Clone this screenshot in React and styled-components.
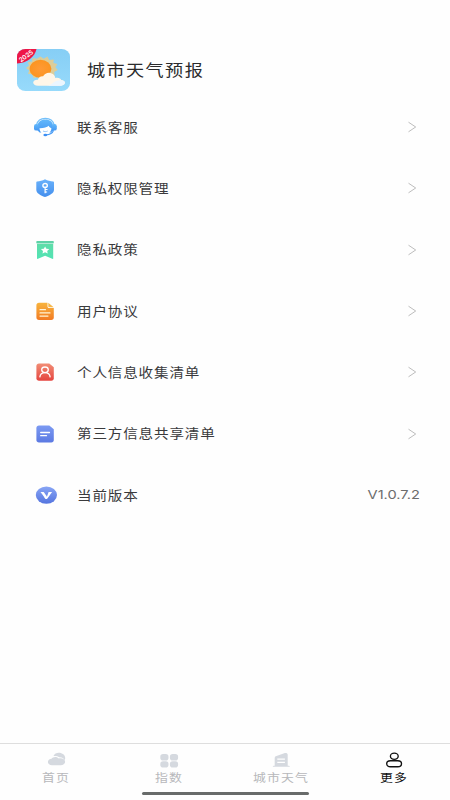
import React from 'react';
import styled, { createGlobalStyle } from 'styled-components';

const GlobalStyle = createGlobalStyle`
* {
    box-sizing: border-box;
}
body {
    margin: 0;
    background: #fefefe;
    font-family: "Noto Sans CJK SC", "Noto Sans", sans-serif;
}
`;

const Page = styled.div`
height: 800px;
width: 450px;
display: flex;
flex-direction: column;
overflow: hidden;
svg {
    display: block;
    overflow: visible;
}
`;

const Header = styled.header`
display: flex;
align-items: center;
height: 47px;
margin-top: 46.5px;
padding-left: 17px;
`;

const Title = styled.h1`
margin: 0 0 2px 16.5px;
font-size: 16.2px;
font-weight: 400;
line-height: 24px;
letter-spacing: 1.25px;
color: #2b2b2d;
white-space: nowrap;
transform: scaleX(1.12);
transform-origin: left center;
`;

const Menu = styled.main`
flex: 1;
padding-top: 3px;
`;

const Row = styled.div`
display: flex;
align-items: center;
height: 61.33px;
padding: 0 31px 0 33px;
`;

const RowIcon = styled.div`
width: 24px;
height: 22px;
margin-right: 20px;
`;

const Label = styled.span`
margin-bottom: 1px;
font-size: 13px;
line-height: 20px;
letter-spacing: 0.75px;
color: #3a3a3c;
white-space: nowrap;
transform: scaleX(1.12);
transform-origin: left center;
`;

const Side = styled.div`
margin-left: auto;
display: flex;
align-items: center;
`;

const Version = styled.span`
margin-right: -0.7px;
font-family: Inter, "Noto Sans", sans-serif;
font-size: 12px;
line-height: 20px;
color: #6c6c6c;
transform: scaleX(1.22);
transform-origin: right center;
`;

const TabBar = styled.nav`
display: flex;
height: 48.5px;
border-top: 1px solid #dedede;
`;

const Tab = styled.div`
flex: 1;
display: flex;
flex-direction: column;
align-items: center;
padding-top: 8px;
color: ${props => props.$active ? '#111' : '#b7b8bb'};
span {
    font-size: 11px;
    line-height: 16px;
    margin-top: 0.5px;
    letter-spacing: 1px;
    white-space: nowrap;
    transform: scaleX(1.17);
}
`;

const HomeIndicator = styled.div`
width: 167px;
height: 3px;
margin: 0 auto 5.5px;
border-radius: 2px;
background: #686b6a;
`;

const AppLogo = () => (
    <svg width="53" height="42" viewBox="0 0 53 42">
        <defs>
            <clipPath id="logoClip"><rect width="53" height="42" rx="8.5" ry="7.5" /></clipPath>
            <linearGradient id="sky" x1="0" y1="0" x2="0" y2="1">
                <stop offset="0" stopColor="#86cef5" />
                <stop offset="1" stopColor="#97dafb" />
            </linearGradient>
            <radialGradient id="sun">
                <stop offset="0" stopColor="#ff9a35" />
                <stop offset="1" stopColor="#fb9521" />
            </radialGradient>
        </defs>
        <g clipPath="url(#logoClip)">
            <rect width="53" height="42" fill="url(#sky)" />
            <path d="M23.5 7.500l3.200 2.300 3.800-2.200 1.700 3.400 4.600-.6-.4 3.700 3.900 1-1.900 3.200 2.400 2.700-3.600 1.900.4 3.600-4.400.2-1.900 3.300-4-1.500-3.600 2.500-3-2.800-4.400.9-.9-3.600-4.400-.8 1.200-3.300-3.200-2.400 3-2.500-1.200-3.300 4.200-.8.600-3.500 4.200.8z" fill="#efcc82" opacity=".8" />
            <ellipse cx="23.500" cy="19.800" rx="10.900" ry="9" fill="url(#sun)" />
            <path d="M21 36.800c-3 0-4.800-1.400-4.800-3.200 0-1.900 2-3.100 4.800-2.900.4-2.400 2.600-3.700 5.100-3.400 1.600-2.700 4.400-4 7.200-3.400 3 .6 4.700 2.700 5 5 3-.7 5.400.3 5.900 2.100 2.400.2 4 1.300 3.800 2.800-.2 1.800-2.200 3-5 3z" fill="#fff6e8" />
            <path d="M29 36.800c3.500 0 5.500-1.900 7.500-3.400 3-2 8-3 10.500-1.100 2.300 2-.5 4.500-4 4.500z" fill="#ebf6ff" />
            <path d="M0 0h19.500C18 7.500 10 14.200 0 14.500z" fill="#ee1747" />
            <text x="9" y="9.300" textAnchor="middle" fontFamily="Inter, sans-serif" fontSize="6.300" fontWeight="600" fill="#fff" transform="rotate(-36 9 7)">2025</text>
        </g>
    </svg>
);

const Gradient = ({ id, from, to }) => (
    <defs>
        <linearGradient id={id} x1="0" y1="0" x2="0" y2="1">
            <stop offset="0" stopColor={from} />
            <stop offset="1" stopColor={to} />
        </linearGradient>
    </defs>
);

const ServiceIcon = () => (
    <svg width="24" height="22" viewBox="0 0 24 22">
        <Gradient id="service" from="#62b8fb" to="#4598f3" />
        <path d="M3.500 9C4.500 4.600 7.800 2.400 12.300 2.400S20.100 4.600 21.100 9" fill="none" stroke="#74c0fa" strokeWidth="1.200" />
        <path d="M4.600 14.500V9.800c0-3.700 3.300-6.300 7.700-6.300s7.700 2.600 7.700 6.300v4.700l-2 2H6.600z" fill="url(#service)" />
        <path d="M6.500 12.200c4.200.1 7.400-.9 9.300-2.500.4 1.300 1.200 2.100 2.600 2.500-.2 3.700-2.700 6-6 6s-5.700-2.300-5.900-6z" fill="#fff" />
        <rect x="1" y="8" width="4.800" height="6.600" rx="2.200" fill="url(#service)" />
        <rect x="19" y="8" width="4.800" height="6.600" rx="2.200" fill="url(#service)" />
        <path d="M20.600 14.200c-1 2.900-3.700 4.400-7.600 4.700" fill="none" stroke="#459af5" strokeWidth="1.100" />
        <path d="M10 15c1.400.8 3.300.8 4.700 0" fill="none" stroke="#7ab8f7" strokeWidth=".8" />
        <ellipse cx="12.300" cy="19" rx="1.900" ry="1.200" fill="#3c8ef3" />
    </svg>
);

const ShieldIcon = () => (
    <svg width="24" height="22" viewBox="0 0 24 22">
        <Gradient id="shield" from="#6ab2fb" to="#438eed" />
        <path d="M12 2.200c2.600 1.400 5.400 2 8.200 2.300.6.100.8.400.8 1v7.200c0 3.500-4.500 5.700-9 7.400-4.500-1.700-8.700-3.900-8.700-7.400V5.500c0-.6.200-.9.800-1 2.700-.3 5.300-.9 7.900-2.300z" fill="url(#shield)" />
        <ellipse cx="12.100" cy="8.400" rx="2.200" ry="1.900" fill="none" stroke="#fff" strokeWidth="1.400" />
        <path d="M12.100 10.300v6M12.100 12.500h2.400M12.100 15h2" fill="none" stroke="#fff" strokeWidth="1.200" />
    </svg>
);

const PolicyIcon = () => (
    <svg width="24" height="22" viewBox="0 0 24 22">
        <Gradient id="policy" from="#5fdda9" to="#52e3b4" />
        <rect x="3.300" y="2" width="17.500" height="2.500" rx=".8" fill="#5ed2a7" />
        <path d="M4 5h16.200v14.400c0 .6-.5.700-1 .4l-7.100-3.100L5 19.800c-.6.300-1 .1-1-.4z" fill="url(#policy)" />
        <path d="M12.100 7.400l1.300 2.300 2.900.4-2.100 1.800.5 2.600-2.600-1.200-2.600 1.200.5-2.600-2.100-1.800 2.900-.4z" fill="#fff" />
    </svg>
);

const AgreementIcon = () => (
    <svg width="24" height="22" viewBox="0 0 24 22">
        <Gradient id="agreement" from="#f8b43d" to="#f27b24" />
        <path d="M6 2.700h8.500v3.600c0 1.200.7 1.800 2 1.800h4.300v9.300c0 1.600-.9 2.500-2.500 2.500H6c-1.600 0-2.600-.9-2.600-2.500V5.200c0-1.600 1-2.500 2.600-2.500z" fill="url(#agreement)" />
        <path d="M15.300 2.700l5.400 4.600h-3.900c-1 0-1.500-.4-1.500-1.200z" fill="#f6b84b" />
        <path d="M7 9.700h5.500M7 12.900h10M7 16.100h8" stroke="#fff3d6" strokeWidth="1.200" strokeLinecap="round" />
    </svg>
);

const PersonIcon = () => (
    <svg width="24" height="22" viewBox="0 0 24 22">
        <Gradient id="person" from="#f18d75" to="#e5443f" />
        <path d="M6 2.600h10.300l4.500 3.700v11c0 1.600-.9 2.500-2.500 2.500H6c-1.600 0-2.600-.9-2.600-2.500V5.100c0-1.600 1-2.500 2.600-2.500z" fill="url(#person)" />
        <ellipse cx="12" cy="8.800" rx="3.300" ry="2.800" fill="none" stroke="#fff" strokeWidth="1.300" />
        <path d="M6.900 15.900c.3-2.600 2.200-4.200 5.100-4.200s4.800 1.600 5.100 4.200" fill="none" stroke="#fff" strokeWidth="1.300" strokeLinecap="round" />
    </svg>
);

const ShareIcon = () => (
    <svg width="24" height="22" viewBox="0 0 24 22">
        <Gradient id="share" from="#7c9af2" to="#5b79e2" />
        <path d="M6 2.400h10.300l4.500 3.900v10.800c0 1.600-.9 2.500-2.500 2.500H6c-1.600 0-2.600-.9-2.600-2.500V4.900c0-1.600 1-2.500 2.600-2.500z" fill="url(#share)" />
        <path d="M7.700 9.500h8.800M7.700 12.700h5.800" stroke="#fff" strokeWidth="1.300" strokeLinecap="round" />
    </svg>
);

const VersionIcon = () => (
    <svg width="24" height="22" viewBox="0 0 24 22">
        <Gradient id="version" from="#88a5f5" to="#5575df" />
        <ellipse cx="13.400" cy="11.100" rx="10.600" ry="8.600" fill="url(#version)" />
        <path d="M7.500 7.900h3.200l3.200 4.600-1.200 2.400z" fill="#fff" />
        <path d="M15.600 7.900h3.500l-4.700 6.500c-.6.700-1.600.8-2.300.2l-.9-1.200 2.700-.7z" fill="#fff" />
    </svg>
);

const Arrow = () => (
    <svg width="14" height="12" viewBox="0 0 14 12">
        <path d="M3.500 1.200l7.200 4.800-7.200 4.800" fill="none" stroke="#bdbdbd" strokeWidth="1" />
    </svg>
);

const CloudIcon = () => (
    <svg width="20" height="16" viewBox="0 0 20 16">
        <path d="M7.500 4.100C8.500 1.700 10.400.8 12.700.8c3.700 0 6.500 2.300 6.500 5.200 0 .9-.2 1.700-.6 2.300-.8-2-2.900-3.200-5.300-3-1.500-1.100-3.600-1.600-5.800-1.200z" fill="#d5d9df" />
        <path d="M6 13.200c-2.400 0-4.100-1.300-4.100-3.200 0-1.800 1.500-3.200 3.600-3.300.8-1.100 2.100-1.800 3.700-1.800 1.500 0 2.800.6 3.600 1.600 3.500-.6 6.300.8 6.300 3.200 0 2.200-1.900 3.500-4.400 3.500z" fill="#d5d9df" />
    </svg>
);

const GridIcon = () => (
    <svg width="20" height="16" viewBox="0 0 20 16" fill="#d5d9df">
        <rect x="1.300" y="2" width="8.200" height="6.500" rx="2.800" />
        <rect x="10.900" y="2" width="8.200" height="6.500" rx="2.800" />
        <rect x="1.300" y="9.200" width="8.200" height="6.300" rx="2.800" />
        <rect x="10.900" y="9.200" width="8.200" height="6.300" rx="2.800" />
    </svg>
);

const BuildingIcon = () => (
    <svg width="20" height="16" viewBox="0 0 20 16">
        <path d="M3.700 13.800V5.900c0-.8.4-1.300 1.100-1.600l8.400-3.100c1.900-.6 3.500.1 3.500 1.600v11h.7c.9 0 1.400.3 1.400 1H1.800c0-.7.500-1 1.400-1z" fill="#d5d9df" />
        <path d="M6.300 7.200h7.600M6.300 10.300h7.600" stroke="#fff" strokeWidth="1.200" />
    </svg>
);

const MoreIcon = () => (
    <svg width="20" height="16" viewBox="0 0 20 16" fill="none" stroke="#111" strokeWidth="1.350">
        <ellipse cx="10.300" cy="4.200" rx="3.900" ry="3.100" />
        <rect x="2.700" y="8.700" width="14.800" height="6.100" rx="3.700" ry="3.050" />
    </svg>
);

const rows = [
    { label: '联系客服', Icon: ServiceIcon },
    { label: '隐私权限管理', Icon: ShieldIcon },
    { label: '隐私政策', Icon: PolicyIcon },
    { label: '用户协议', Icon: AgreementIcon },
    { label: '个人信息收集清单', Icon: PersonIcon },
    { label: '第三方信息共享清单', Icon: ShareIcon },
    { label: '当前版本', Icon: VersionIcon, value: 'V1.0.7.2' },
];

const tabs = [
    { label: '首页', Icon: CloudIcon },
    { label: '指数', Icon: GridIcon },
    { label: '城市天气', Icon: BuildingIcon },
    { label: '更多', Icon: MoreIcon, active: true },
];

const App = () => {
    return (
        <Page>
            <GlobalStyle />
            <Header>
                <AppLogo />
                <Title>城市天气预报</Title>
            </Header>
            <Menu>
                {rows.map(({ label, Icon, value }) => (
                    <Row key={label}>
                        <RowIcon><Icon /></RowIcon>
                        <Label>{label}</Label>
                        <Side>{value ? <Version>{value}</Version> : <Arrow />}</Side>
                    </Row>
                ))}
            </Menu>
            <TabBar>
                {tabs.map(({ label, Icon, active }) => (
                    <Tab key={label} $active={active}>
                        <Icon />
                        <span>{label}</span>
                    </Tab>
                ))}
            </TabBar>
            <HomeIndicator />
        </Page>
    );
};

export default App;
